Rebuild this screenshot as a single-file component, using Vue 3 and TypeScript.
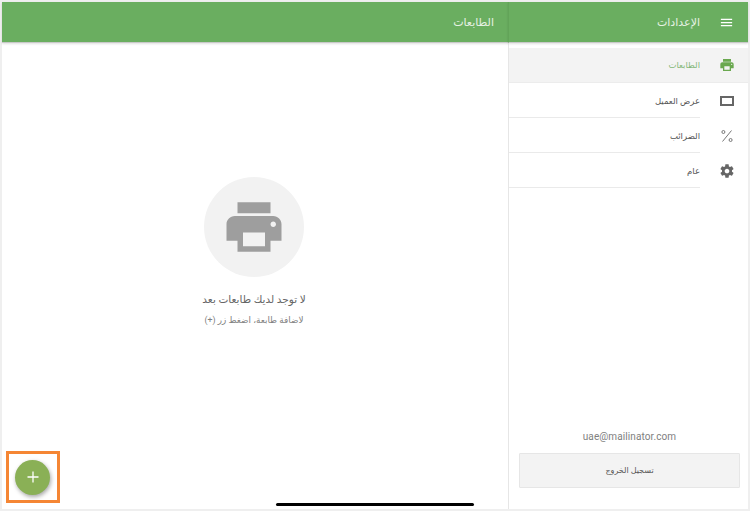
<script setup lang="ts">
const menu = [
  { id: "printers", label: "الطابعات", active: true },
  { id: "display", label: "عرض العميل", active: false },
  { id: "tax", label: "الضرائب", active: false },
  { id: "general", label: "عام", active: false },
];
</script>

<template>
  <div class="screen">
    <main class="pane">
      <header class="bar bar-main"><span class="bar-title">الطابعات</span></header>
      <div class="content">
        <div class="empty">
          <div class="empty-circle">
            <svg width="66" height="66" viewBox="0 0 24 24" fill="#9e9e9e">
              <path d="M19 8H5c-1.66 0-3 1.34-3 3v6h4v4h12v-4h4v-6c0-1.66-1.34-3-3-3zm-3 11H8v-5h8v5zm3-7c-.55 0-1-.45-1-1s.45-1 1-1 1 .45 1 1-.45 1-1 1zm-1-9H6v4h12V3z" />
            </svg>
          </div>
          <p class="empty-title">لا توجد لديك طابعات بعد</p>
          <p class="empty-hint">لاضافة طابعة، اضغط زر (+)</p>
        </div>
        <div class="highlight">
          <button class="fab" type="button" aria-label="add">
            <svg width="14" height="14" viewBox="0 0 14 14" stroke="#fff" stroke-width="1.3" fill="none"><path d="M7 1.5v11M1.5 7h11" /></svg>
          </button>
        </div>
      </div>
    </main>

    <aside class="pane side">
      <header class="bar bar-side">
        <svg class="rail-icon" width="15" height="15" viewBox="0 0 24 24" fill="#fff"><path d="M3 18h18v-2H3v2zm0-5h18v-2H3v2zm0-7v2h18V6H3z" /></svg>
        <span class="bar-title">الإعدادات</span>
      </header>
      <nav class="menu">
        <a v-for="item in menu" :key="item.id" class="menu-row" :class="{ active: item.active }">
          <span class="rail">
            <svg v-if="item.id === 'printers'" width="16" height="16" viewBox="0 0 24 24" fill="#6aa84f"><path d="M19 8H5c-1.66 0-3 1.34-3 3v6h4v4h12v-4h4v-6c0-1.66-1.34-3-3-3zm-3 11H8v-5h8v5zm3-7c-.55 0-1-.45-1-1s.45-1 1-1 1 .45 1 1-.45 1-1 1zm-1-9H6v4h12V3z" /></svg>
            <svg v-else-if="item.id === 'display'" width="18" height="18" viewBox="0 0 18 18" fill="none" stroke="#666" stroke-width="2"><rect x="3" y="5" width="12" height="8" /></svg>
            <svg v-else-if="item.id === 'tax'" width="18" height="18" viewBox="0 0 18 18" fill="none" stroke="#777" stroke-width="1"><path d="M13.5 3.5 4.5 14.5" /><circle cx="5.4" cy="5" r="1.5" /><circle cx="12.6" cy="13" r="1.5" /></svg>
            <svg v-else width="16" height="16" viewBox="0 0 24 24" fill="#666"><path d="M19.43 12.98c.04-.32.07-.64.07-.98s-.03-.66-.07-.98l2.11-1.65c.19-.15.24-.42.12-.64l-2-3.46c-.12-.22-.39-.3-.61-.22l-2.49 1c-.52-.4-1.08-.73-1.69-.98l-.38-2.65C14.46 2.18 14.25 2 14 2h-4c-.25 0-.46.18-.49.42l-.38 2.65c-.61.25-1.17.59-1.69.98l-2.49-1c-.23-.09-.49 0-.61.22l-2 3.46c-.13.22-.07.49.12.64l2.11 1.65c-.04.32-.07.65-.07.98s.03.66.07.98l-2.11 1.65c-.19.15-.24.42-.12.64l2 3.46c.12.22.39.3.61.22l2.49-1c.52.4 1.08.73 1.69.98l.38 2.65c.03.24.24.42.49.42h4c.25 0 .46-.18.49-.42l.38-2.65c.61-.25 1.17-.59 1.69-.98l2.49 1c.23.09.49 0 .61-.22l2-3.46c.12-.22.07-.49-.12-.64l-2.11-1.65zM12 15.5c-1.93 0-3.5-1.57-3.5-3.5s1.57-3.5 3.5-3.5 3.5 1.57 3.5 3.5-1.57 3.5-3.5 3.5z" /></svg>
          </span>
          <span class="menu-label">{{ item.label }}</span>
        </a>
      </nav>
      <div class="account">
        <div class="email">uae@mailinator.com</div>
        <button class="logout" type="button">تسجيل الخروج</button>
      </div>
    </aside>
    <div class="home-indicator"></div>
  </div>
</template>

<style scoped>
.screen {
  position: relative;
  box-sizing: border-box;
  width: 750px;
  height: 511px;
  padding: 2px;
  display: grid;
  grid-template-columns: 507px 239px;
  background: #efefef;
  font-family: Roboto, "DejaVu Sans", sans-serif;
}
.pane {
  display: flex;
  flex-direction: column;
  background: #fff;
  min-height: 0;
}
.side {
  border-left: 1px solid #e6e6e6;
  margin-left: -1px;
}
.bar {
  flex: none;
  height: 40px;
  display: flex;
  align-items: center;
  background: #6aae60;
  border-bottom: 1px solid #c9c9c9;
  box-shadow: 0 1px 2px rgba(0, 0, 0, 0.12);
  color: #e6f1e3;
}
.bar-main {
  justify-content: flex-end;
  padding-right: 15px;
}
.bar-side {
  margin-left: -1px;
  justify-content: flex-end;
  border-left: 1px solid #62a458;
}
.bar-title {
  font-size: 11px;
  direction: rtl;
}
.bar-side .bar-title {
  order: 1;
}
.rail-icon {
  order: 2;
  margin: 0 14px 0 19px;
}
.content {
  position: relative;
  flex: 1;
  display: flex;
  justify-content: center;
  padding-right: 3px;
}
.empty {
  margin-top: 134px;
  display: flex;
  flex-direction: column;
  align-items: center;
  text-align: center;
}
.empty-circle {
  width: 100px;
  height: 100px;
  border-radius: 50%;
  background: #f2f2f2;
  display: flex;
  align-items: center;
  justify-content: center;
}
.empty-title {
  margin: 16px 0 0;
  font-size: 10.5px;
  line-height: 14px;
  color: #666;
  direction: rtl;
}
.empty-hint {
  margin: 7px 0 0;
  font-size: 8.8px;
  line-height: 12px;
  color: #808080;
  direction: rtl;
}
.highlight {
  position: absolute;
  left: 4px;
  top: 408px;
  box-sizing: border-box;
  width: 54px;
  height: 52px;
  border: 3px solid #f58634;
  display: flex;
  align-items: center;
  justify-content: center;
}
.fab {
  width: 35px;
  height: 35px;
  margin-right: 1px;
  padding: 0;
  border: 0;
  border-radius: 50%;
  background: #8ab056;
  box-shadow: 1px 2px 4px rgba(0, 0, 0, 0.35);
  display: flex;
  align-items: center;
  justify-content: center;
}
.menu {
  margin-top: 5px;
  display: flex;
  flex-direction: column;
}
.menu-row {
  height: 35px;
  box-sizing: border-box;
  display: flex;
  flex-direction: row-reverse;
  align-items: center;
  background: linear-gradient(to left, transparent 48px, #eaeaea 48px) bottom / 100% 1px no-repeat;
  font-size: 8.5px;
  color: #555;
}
.menu-row.active {
  background: #f3f3f3;
  border-bottom: 1px solid #ececec;
  color: #83b777;
}
.rail {
  box-sizing: border-box;
  width: 48px;
  padding-left: 6px;
  flex: none;
  display: flex;
  justify-content: center;
}
.menu-label {
  direction: rtl;
}
.account {
  margin-top: auto;
  padding: 0 8px 21px 10px;
  display: flex;
  flex-direction: column;
}
.email {
  text-align: center;
  font-size: 10px;
  line-height: 14px;
  color: #808080;
  margin-bottom: 9px;
  letter-spacing: 0.1px;
}
.logout {
  height: 35px;
  border: 1px solid #e6e6e6;
  background: #f3f3f3;
  border-radius: 1px;
  font-family: inherit;
  font-size: 8px;
  color: #555;
  direction: rtl;
}
.home-indicator {
  position: absolute;
  left: 276px;
  top: 503px;
  width: 198px;
  height: 3px;
  border-radius: 2px;
  background: #000;
}
</style>
